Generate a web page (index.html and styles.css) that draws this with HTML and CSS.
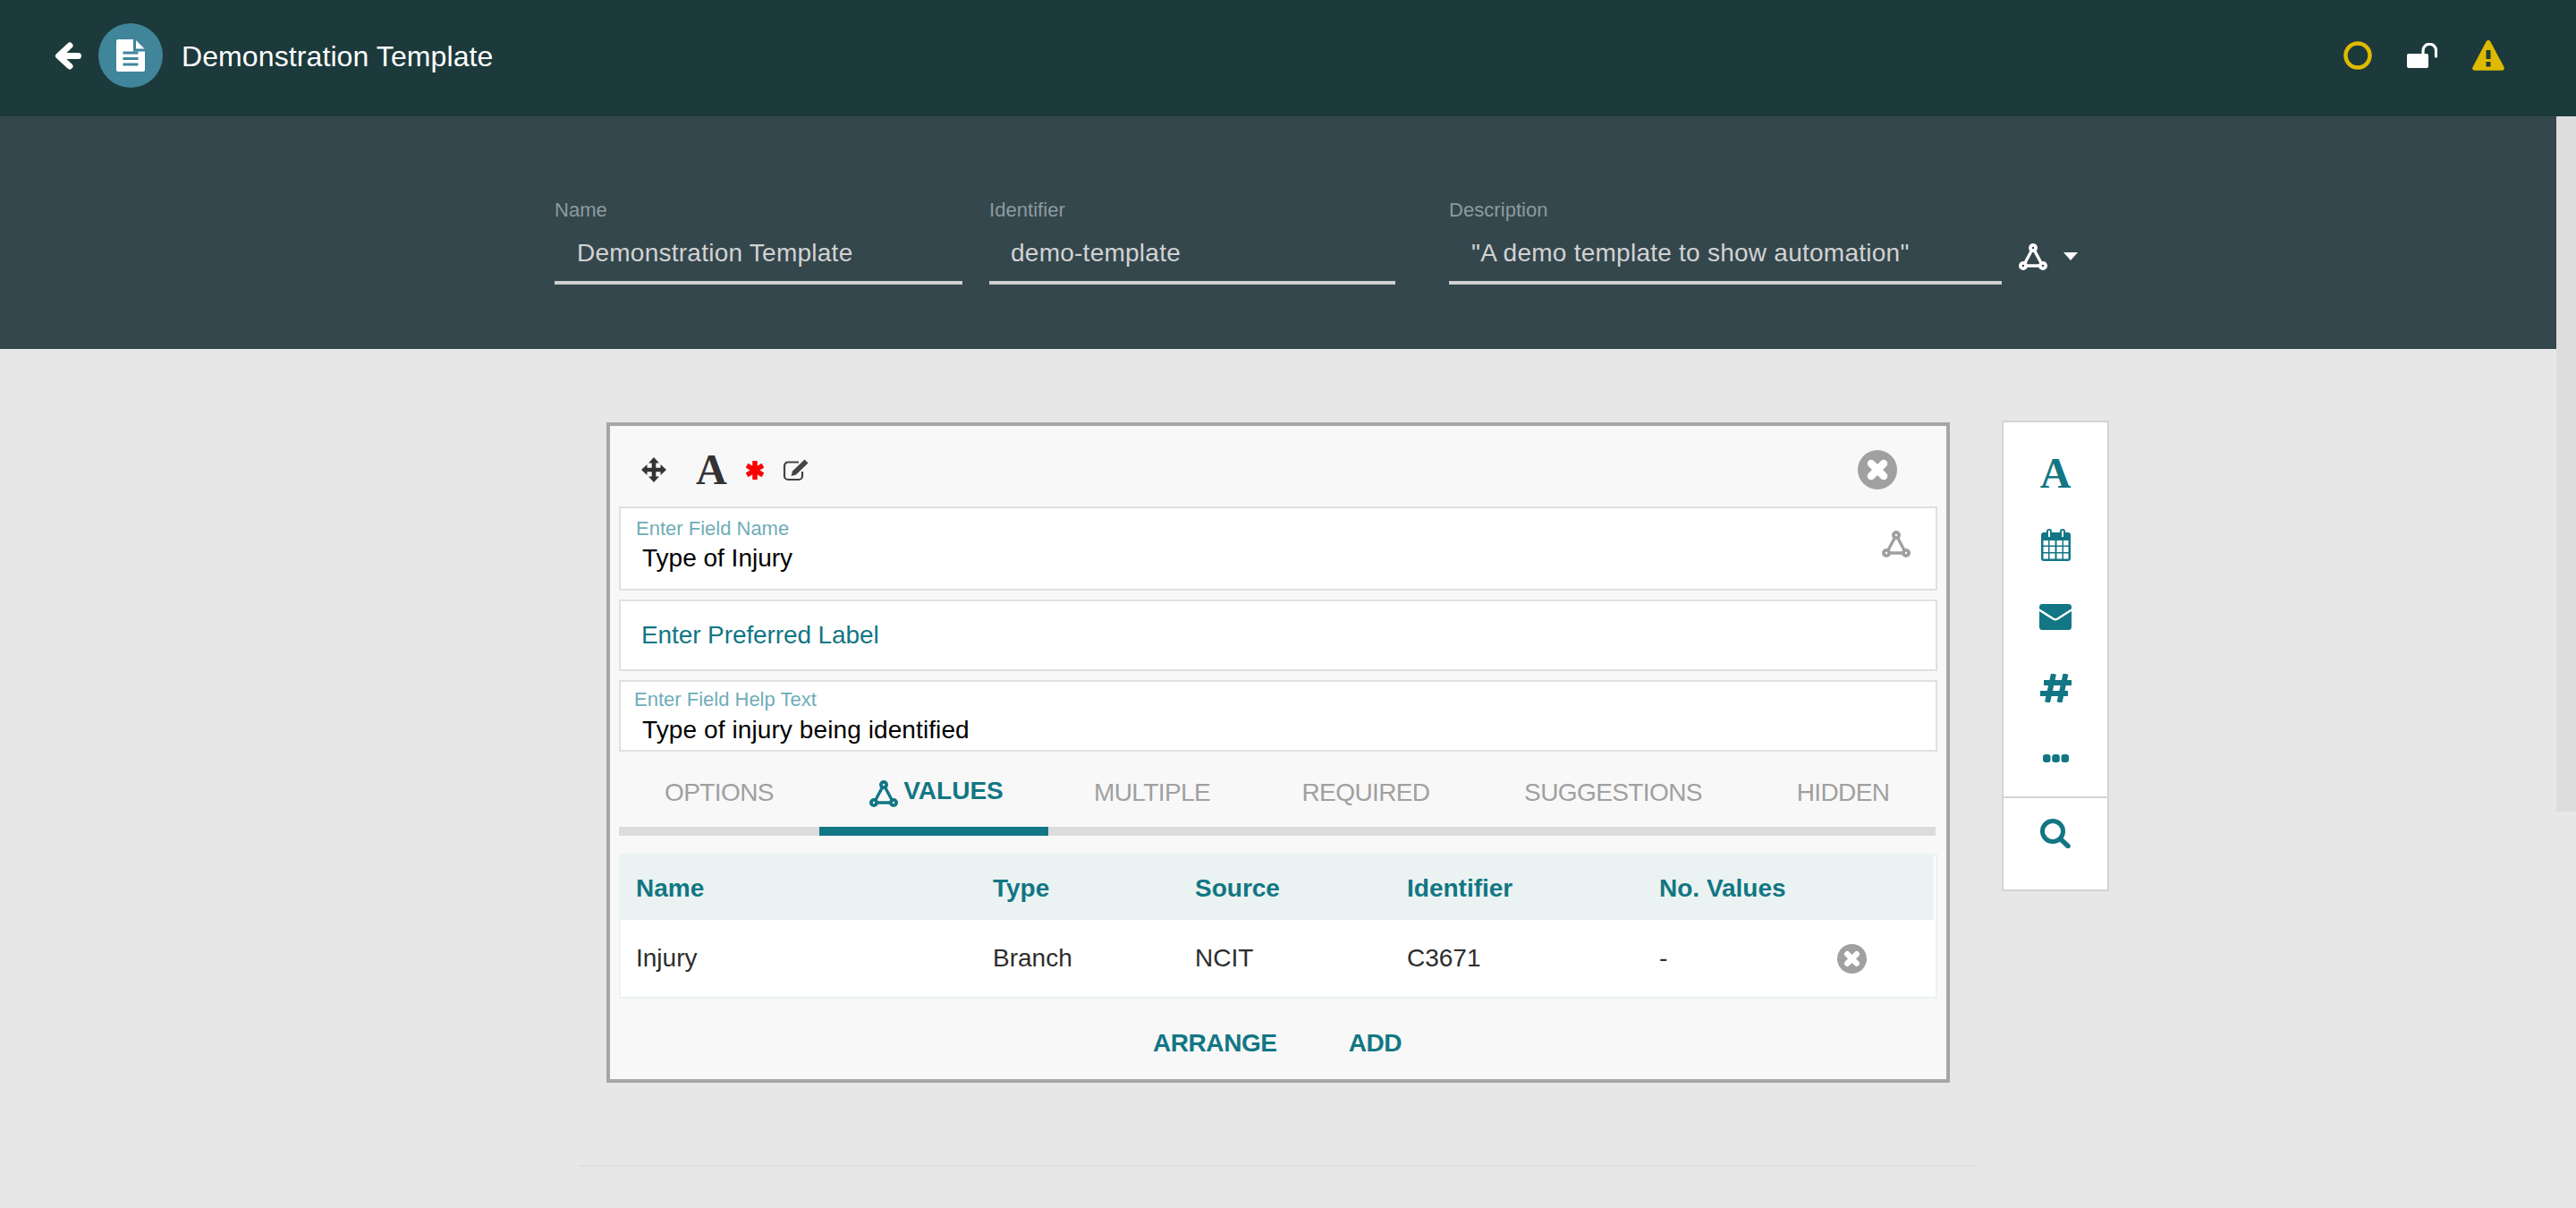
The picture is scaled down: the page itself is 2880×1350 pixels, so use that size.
FILE: index.html
```html
<!DOCTYPE html>
<html lang="en">
<head>
<meta charset="utf-8">
<title>Demonstration Template</title>
<link rel="stylesheet" href="styles.css">
</head>
<body>
<svg class="defs" xmlns="http://www.w3.org/2000/svg">
  <symbol id="net" viewBox="0 0 32 30">
    <g fill="none" stroke="currentColor" stroke-width="3.800">
      <circle cx="16" cy="5" r="3.100"/><circle cx="5" cy="25" r="3.100"/><circle cx="27" cy="25" r="3.100"/>
      <path stroke-width="3.400" d="M14.400 8 7 21.800M17.600 8 25 21.800M8 25H24"/>
    </g>
  </symbol>
  <symbol id="close" viewBox="0 0 44 44">
    <circle cx="22" cy="22" r="22" fill="currentColor"/>
    <path d="M15 15 29 29M29 15 15 29" stroke="#fff" stroke-width="8.500" stroke-linecap="round"/>
  </symbol>
</svg>

<header class="topbar">
  <svg class="ic-back" viewBox="0 0 30 31"><path d="M17 4 4.500 15.500 17 27M6 15.500H26.500" fill="none" stroke="#fff" stroke-width="7" stroke-linecap="round" stroke-linejoin="round"/></svg>
  <div class="doc-badge">
    <svg class="ic-doc" viewBox="0 0 32 36">
      <path fill="#fff" d="M2 0H19V13.500H32V34a2 2 0 0 1-2 2H2a2 2 0 0 1-2-2V2A2 2 0 0 1 2 0Z"/>
      <path fill="#fff" d="M22 1 31.500 10.500H22Z"/>
      <path stroke="#40859a" stroke-width="2.800" d="M7.500 15H24.500M7.500 21.500H24.500M7.500 28H24.500"/>
    </svg>
  </div>
  <h1 class="title">Demonstration Template</h1>
  <div class="status">
    <svg class="ic-ring" viewBox="0 0 32 32"><circle cx="16" cy="16" r="13.500" fill="none" stroke="#e0ba00" stroke-width="4.500"/></svg>
    <svg class="ic-lock" viewBox="0 0 34 28"><rect x="0" y="12" width="24" height="16" rx="2" fill="#fff"/><path d="M18 13V8.500a7.250 7.250 0 0 1 14.500 0V15" fill="none" stroke="#fff" stroke-width="3.200" stroke-linecap="round"/></svg>
    <svg class="ic-warn" viewBox="0 0 36 34"><path fill="#e0ba00" d="M18 0c1 0 2 .6 2.400 1.500L35.500 30c.8 1.600-.2 3.800-2 3.800H2.500c-1.800 0-2.800-2.200-2-3.800L15.600 1.500C16 .6 17 0 18 0Z"/><path fill="#1c3a3c" d="M15.500 11H20.500V21H15.500ZM15.500 24H20.500V29.500H15.500Z"/></svg>
  </div>
</header>

<section class="hero">
  <div class="hfield hf-name"><label class="hlabel">Name</label><div class="hvalue">Demonstration Template</div></div>
  <div class="hfield hf-id"><label class="hlabel">Identifier</label><div class="hvalue">demo-template</div></div>
  <div class="hfield hf-desc"><label class="hlabel">Description</label><div class="hvalue">"A demo template to show automation"</div></div>
  <svg class="ic-net hero-net"><use href="#net"/></svg>
  <span class="caret"></span>
</section>

<main class="content">
  <div class="builder">
    <article class="card">
      <div class="toolbar">
        <svg class="ic-move" viewBox="0 0 28 28"><path fill="#333" d="M14 0 20 6.500H16.300V11.700H21.500V8L28 14 21.500 20V16.300H16.300V21.500H20L14 28 8 21.500H11.700V16.300H6.500V20L0 14 6.500 8V11.700H11.700V6.500H8Z"/></svg>
        <span class="glyph-a">A</span>
        <svg class="ic-star" viewBox="0 0 20 21"><path d="M10 0V21M1 5.200 19 15.800M19 5.200 1 15.800" stroke="#f00" stroke-width="5.500"/></svg>
        <svg class="ic-edit" viewBox="0 0 29 25"><path d="M18 3.500H6a4 4 0 0 0-4 4V19a4 4 0 0 0 4 4H18a4 4 0 0 0 4-4V14" fill="none" stroke="#444" stroke-width="2.200"/><path fill="#444" stroke="#f8f8f8" stroke-width="1.200" paint-order="stroke" d="M24.500 .5 28.500 4.500 15 17.500 9.500 19 11 13.500Z"/></svg>
        <svg class="ic-close-lg"><use href="#close"/></svg>
      </div>

      <div class="field field-name">
        <div>
          <div class="flabel">Enter Field Name</div>
          <div class="fvalue">Type of Injury</div>
        </div>
        <svg class="ic-net field-net"><use href="#net"/></svg>
      </div>
      <div class="field field-pref">Enter Preferred Label</div>
      <div class="field field-help">
        <div class="flabel">Enter Field Help Text</div>
        <div class="fvalue">Type of injury being identified</div>
      </div>

      <nav class="tabs">
        <div class="tab">OPTIONS</div>
        <div class="tab active"><svg class="ic-net tab-net"><use href="#net"/></svg><span>VALUES</span></div>
        <div class="tab">MULTIPLE</div>
        <div class="tab">REQUIRED</div>
        <div class="tab">SUGGESTIONS</div>
        <div class="tab">HIDDEN</div>
      </nav>

      <div class="table">
        <div class="tr thead"><div>Name</div><div>Type</div><div>Source</div><div>Identifier</div><div>No. Values</div></div>
        <div class="tr tbody"><div>Injury</div><div>Branch</div><div>NCIT</div><div>C3671</div><div>-</div><svg class="ic-close-sm"><use href="#close"/></svg></div>
      </div>

      <div class="actions"><span>ARRANGE</span><span>ADD</span></div>
    </article>

    <aside class="palette">
      <div class="pal-top">
        <div class="pal-cell"><span class="glyph-a teal">A</span></div>
        <div class="pal-cell">
          <svg class="ic-cal" viewBox="0 0 33 36">
            <rect y="4" width="33" height="32" rx="3" fill="#127684"/>
            <rect x="6" y="0" width="6" height="11" rx="3" fill="#127684"/><rect x="21" y="0" width="6" height="11" rx="3" fill="#127684"/>
            <rect x="8" y="2" width="2" height="7" fill="#fff"/><rect x="23" y="2" width="2" height="7" fill="#fff"/>
            <path fill="#fff" d="M2.500 13H8V18.500H2.500ZM9.500 13H15.500V18.500H9.500ZM17.500 13H23.500V18.500H17.500ZM25 13H30.500V18.500H25ZM2.500 20H8V26H2.500ZM9.500 20H15.500V26H9.500ZM17.500 20H23.500V26H17.500ZM25 20H30.500V26H25ZM2.500 27.500H8V33.500H2.500ZM9.500 27.500H15.500V33.500H9.500ZM17.500 27.500H23.500V33.500H17.500ZM25 27.500H30.500V33.500H25Z"/>
          </svg>
        </div>
        <div class="pal-cell">
          <svg class="ic-mail" viewBox="0 0 36 29"><rect width="36" height="29" rx="3.500" fill="#127684"/><path d="M-1 6 15.500 16.500Q18 18 20.500 16.500L37 6" fill="none" stroke="#fff" stroke-width="2.400"/></svg>
        </div>
        <div class="pal-cell">
          <svg class="ic-hash" viewBox="0 0 35 32"><path d="M15 0 8 32M28.500 0 21.500 32M4 10H35M0 22H31" fill="none" stroke="#127684" stroke-width="6"/></svg>
        </div>
        <div class="pal-cell dots-cell">
          <svg class="ic-dots" viewBox="0 0 29 9"><rect width="8.500" height="9" rx="3" fill="#127684"/><rect x="10.250" width="8.500" height="9" rx="3" fill="#127684"/><rect x="20.500" width="8.500" height="9" rx="3" fill="#127684"/></svg>
        </div>
      </div>
      <div class="pal-bottom">
        <svg class="ic-search" viewBox="0 0 34 33"><circle cx="14" cy="14" r="11.500" fill="none" stroke="#127684" stroke-width="5"/><path d="M23 23 31 30.500" stroke="#127684" stroke-width="5.500" stroke-linecap="round"/></svg>
      </div>
    </aside>
  </div>
  <hr class="rule">
</main>

<div class="scrollthumb"></div>
</body>
</html>
```

FILE: styles.css
```css
* { box-sizing: border-box; }
html, body { margin: 0; padding: 0; height: 100%; overflow: hidden; }
body {
  position: relative;
  background: #e7e7e7;
  font-family: "Liberation Sans", Arial, sans-serif;
  color: #2d2d2d;
}
svg { display: block; flex: none; }
.defs { display: none; }

/* top bar */
.topbar {
  display: flex;
  align-items: center;
  height: 130px;
  padding: 0 80px 6px 61px;
  background: #1c3a3c;
}
.ic-back { width: 30px; height: 31px; }
.doc-badge {
  display: flex;
  align-items: center;
  justify-content: center;
  width: 72px;
  height: 72px;
  margin-left: 19px;
  border-radius: 50%;
  background: #40859a;
}
.ic-doc { width: 32px; height: 36px; }
.title {
  margin: 2px 0 0 21px;
  font-size: 32px;
  line-height: 36px;
  font-weight: 400;
  letter-spacing: .1px;
  color: #fff;
}
.status { display: flex; align-items: center; gap: 39px; margin-left: auto; }
.ic-ring { width: 32px; height: 32px; }
.ic-lock { width: 34px; height: 28px; }
.ic-warn { width: 36px; height: 34px; }

/* hero form */
.hero {
  display: flex;
  align-items: flex-start;
  height: 260px;
  padding: 92px 0 0 620px;
  background: #34474d;
}
.hfield { border-bottom: 4px solid #cfcfcf; padding-bottom: 15px; }
.hf-name { width: 456px; }
.hf-id { width: 454px; margin-left: 30px; }
.hf-desc { width: 618px; margin-left: 60px; }
.hlabel { display: block; font-size: 22px; line-height: 26px; letter-spacing: .05px; color: #8e9a9d; }
.hvalue { margin-top: 19px; padding-left: 25px; font-size: 28px; line-height: 32px; letter-spacing: .25px; color: #d2d2d2; }
.hf-id .hvalue { padding-left: 24px; }
.ic-net { width: 32px; height: 30px; }
.hero-net { margin: 50px 0 0 19px; color: #fff; }
.caret {
  margin: 60px 0 0 18px;
  border-left: 8px solid transparent;
  border-right: 8px solid transparent;
  border-top: 9px solid #fff;
}

/* main */
.content { margin-left: 648px; }
.builder { display: flex; align-items: flex-start; padding: 82px 0 0 30px; }
.card {
  flex: none;
  width: 1502px;
  padding: 0 10px;
  border: 4px solid #a6a6a6;
  background: #f8f8f8;
}
.toolbar { display: flex; align-items: center; height: 90px; padding: 8px 45px 0 25px; }
.ic-move { width: 28px; height: 28px; }
.glyph-a {
  font-family: "Liberation Serif", "Times New Roman", serif;
  font-weight: 700;
  font-size: 48px;
  line-height: 48px;
  color: #333;
}
.toolbar .glyph-a { margin-left: 33px; }
.ic-star { width: 20px; height: 21px; margin-left: 21px; }
.ic-edit { width: 29px; height: 25px; margin-left: 21px; }
.ic-close-lg { width: 44px; height: 44px; margin-left: auto; color: #a0a0a0; }

.field { border: 2px solid #e0e0e0; background: #fff; }
.field-name {
  display: flex;
  justify-content: space-between;
  align-items: flex-start;
  height: 94px;
  padding: 10px 28px 0 17px;
}
.field-net { margin-top: 15px; color: #a0a0a0; }
.flabel { font-size: 22px; line-height: 26px; color: #6fadb8; }
.fvalue { margin: 4px 0 0 7px; font-size: 28px; line-height: 32px; color: #000; }
.field-pref {
  display: flex;
  align-items: center;
  height: 80px;
  margin-top: 10px;
  padding-left: 23px;
  font-size: 28px;
  line-height: 32px;
  letter-spacing: -.1px;
  color: #127684;
}
.field-help { height: 80px; margin-top: 10px; padding: 7px 0 0 15px; overflow: hidden; }
.field-help .fvalue { margin: 5px 0 0 9px; letter-spacing: .1px; }

/* tabs */
.tabs { display: grid; grid-template-columns: 224px 256px 232px 246px 307px 207px; width: 1472px; }
.tab {
  display: flex;
  justify-content: center;
  align-items: flex-start;
  height: 94px;
  padding-top: 30px;
  border-bottom: 10px solid #dcdcdc;
  font-size: 28px;
  line-height: 32px;
  letter-spacing: -.6px;
  color: #a0a0a0;
}
.tab.active { border-bottom-color: #127684; padding: 28px 0 0 6px; font-weight: 700; letter-spacing: 0; color: #127684; }
.tab-net { margin: 4px 6px 0 0; }

/* table */
.table { width: 1474px; margin-top: 20px; border: 2px solid #ebf3f2; background: #fff; }
.tr {
  display: grid;
  grid-template-columns: 399px 226px 237px 282px 199px 1fr;
  align-items: center;
  padding-left: 17px;
  font-size: 28px;
  line-height: 32px;
}
.thead { height: 72px; margin-right: 2px; padding-top: 2px; background: #ebf3f2; font-weight: 700; color: #127684; }
.tbody { height: 86px; color: #2d2d2d; }
.ic-close-sm { width: 33px; height: 33px; color: #a0a0a0; }

.actions {
  display: flex;
  justify-content: center;
  gap: 80px;
  height: 90px;
  padding: 34px 2px 0 0;
  font-size: 28px;
  line-height: 32px;
  font-weight: 700;
  letter-spacing: -.4px;
  color: #127684;
}

/* palette */
.palette {
  flex: none;
  width: 120px;
  height: 526px;
  margin: -2px 0 0 58px;
  border: 2px solid #d4d4d4;
  background: #fff;
}
.pal-top { height: 420px; padding-top: 17px; border-bottom: 2px solid #d4d4d4; }
.pal-cell { display: flex; align-items: center; justify-content: center; height: 80px; }
.dots-cell { padding-bottom: 3px; }
.glyph-a.teal { color: #127684; }
.ic-cal { width: 33px; height: 36px; }
.ic-mail { width: 36px; height: 29px; }
.ic-hash { width: 35px; height: 32px; }
.ic-dots { width: 29px; height: 9px; }
.pal-bottom { display: flex; justify-content: center; padding-top: 23px; }
.ic-search { width: 34px; height: 33px; }

.rule { width: 1560px; height: 2px; margin: 92px 0 0; border: 0; background: #dfdfdf; }

/* overlay scrollbar thumb */
.scrollthumb { position: absolute; top: 130px; right: 0; width: 22px; height: 777px; background: #ddd; }
```
